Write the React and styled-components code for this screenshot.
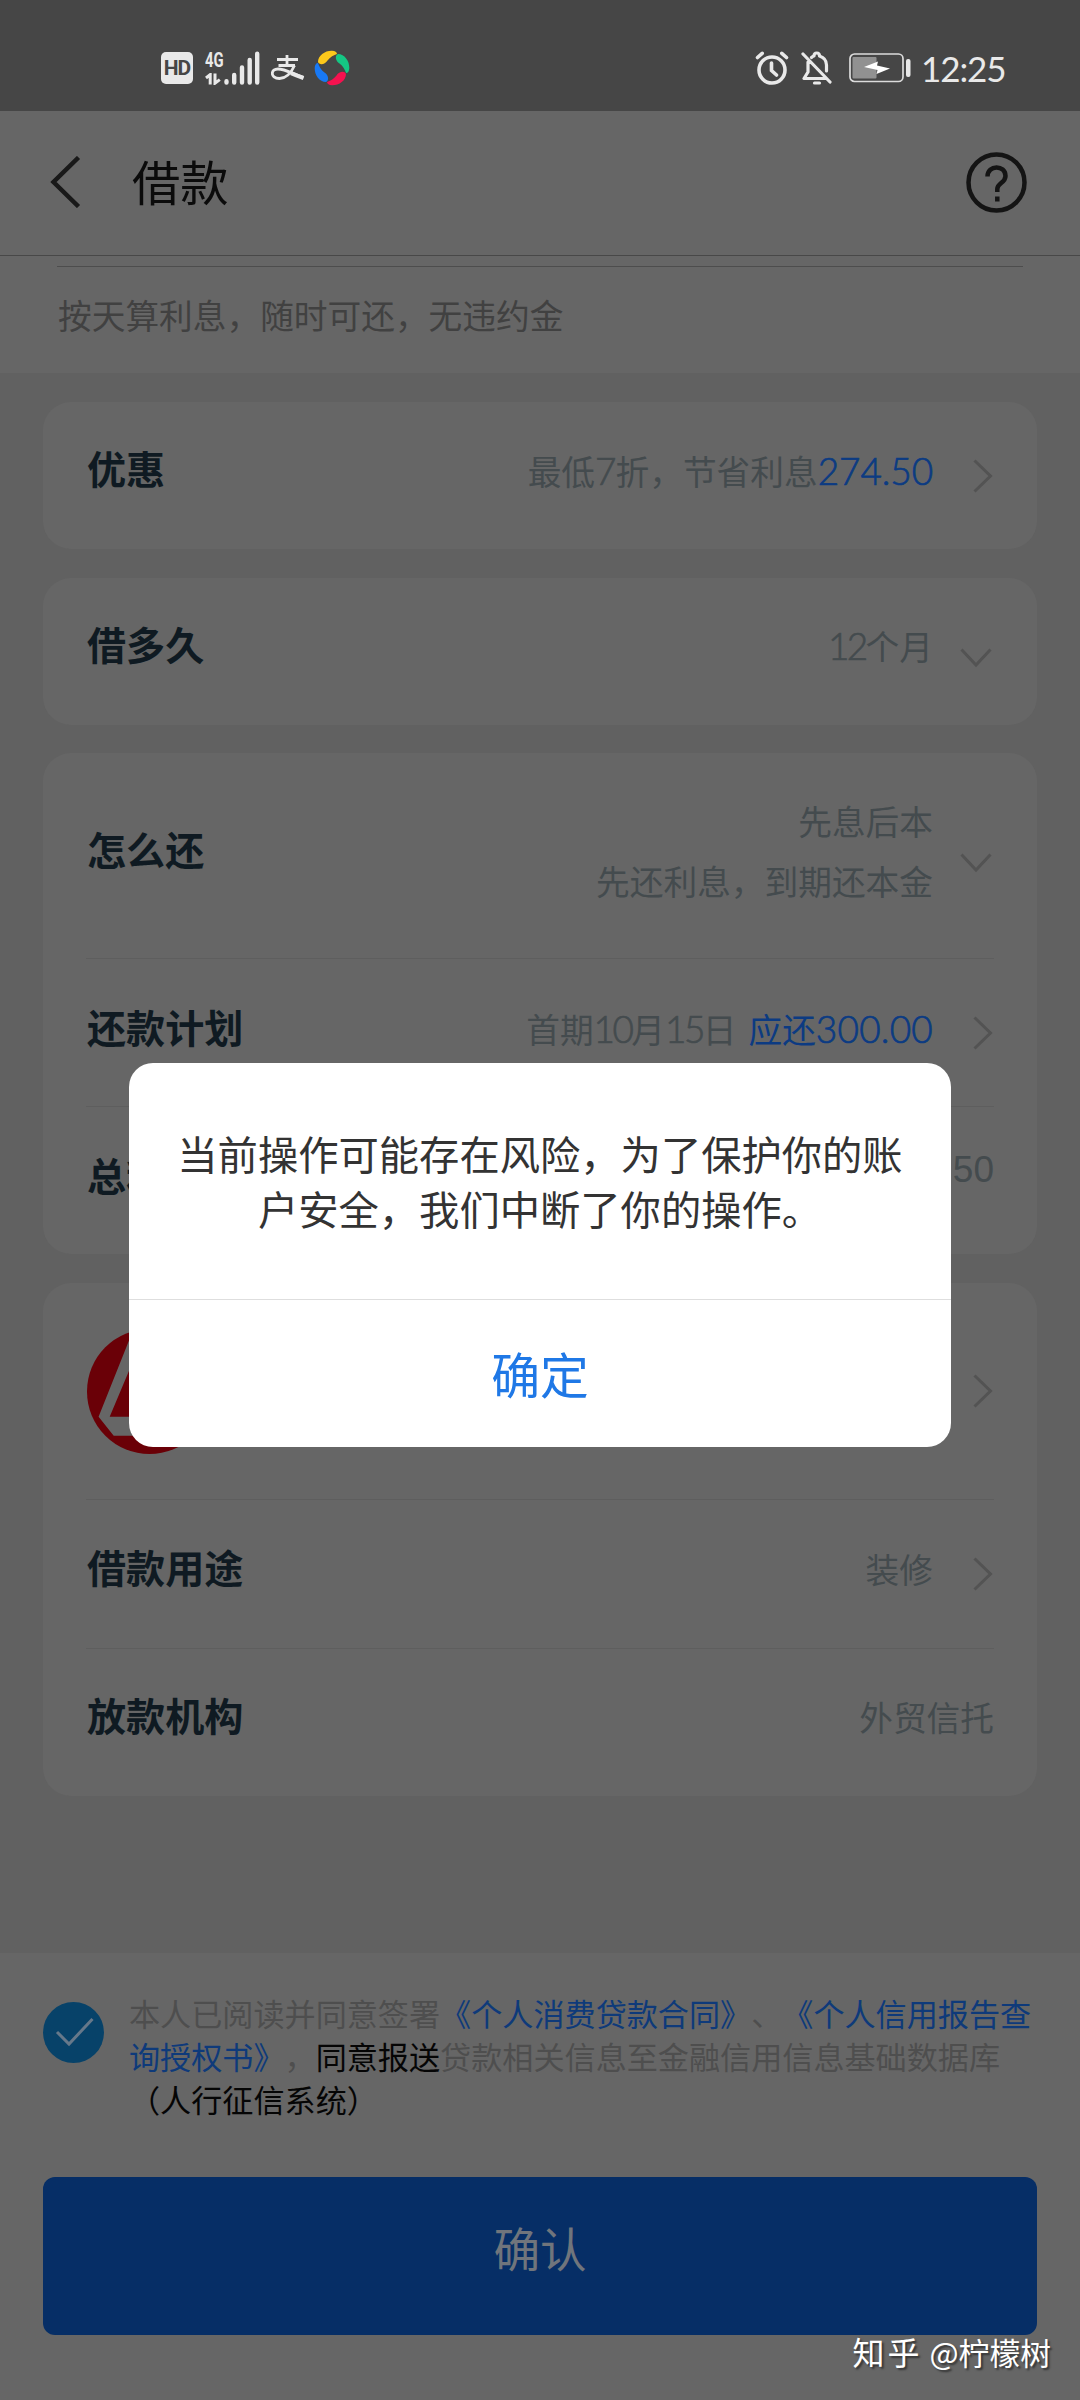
import React from 'react';
import styled, { createGlobalStyle } from 'styled-components';

const Global = createGlobalStyle`
  * { box-sizing: border-box; }
  body { margin: 0; background: #666; }
`;

const cjk = "'Noto Sans CJK SC', sans-serif";

const Screen = styled.div`
  position: relative;
  width: 1080px;
  height: 2400px;
  overflow: hidden;
  display: flex;
  flex-direction: column;
  background: #616161;
  font-family: ${cjk};
  font-weight: 400;
  text-spacing-trim: space-all;
`;

const StatusBar = styled.div`
  height: 111px;
  flex: none;
  display: flex;
  align-items: center;
  justify-content: space-between;
  padding: 25px 75px 0 161px;
  background: #464646;
`;

const StatusGroup = styled.div`
  display: flex;
  align-items: center;
`;

const HdBadge = styled.span`
  width: 32px;
  height: 32px;
  border-radius: 5px;
  background: #e9e9e9;
  color: #464646;
  font: 700 21px/33px Roboto, sans-serif;
  letter-spacing: -1px;
  text-align: center;
`;

const Network = styled.div`
  width: 19px;
  height: 34px;
  margin-left: 12px;
  display: flex;
  flex-direction: column;
  justify-content: space-between;
`;

const NetworkText = styled.span`
  font: 700 20px/18px Roboto, sans-serif;
  color: #e9e9e9;
  transform: scaleX(0.74);
  transform-origin: left center;
`;

const Icon = styled.svg`
  display: block;
  flex: none;
  margin-left: ${(p) => p.$gap || 0}px;
`;

const Clock = styled.span`
  margin-left: 10px;
  width: 84px;
  font: 400 35px/38px Lato, sans-serif;
  letter-spacing: -1.1px;
  color: #e9e9e9;
  white-space: nowrap;
`;

const Header = styled.header`
  height: 145px;
  flex: none;
  display: flex;
  align-items: center;
  padding: 0 53px 2px 50px;
  background: #666;
  border-bottom: 1px solid #484848;
`;

const Title = styled.h1`
  flex: 1;
  margin: 0 0 0 51px;
  font-size: 48.3px;
  line-height: 60px;
  font-weight: 400;
  color: #0b0b0b;
  padding-bottom: 5px;
`;

const Notice = styled.div`
  height: 117px;
  flex: none;
  padding: 10px 57px 0;
  background: #666;
`;

const NoticeText = styled.p`
  margin: 0;
  border-top: 1px solid #4d4d4d;
  padding: 23px 0 0 1px;
  font-size: 33.7px;
  line-height: 50px;
  color: #414141;
`;

const Cards = styled.main`
  flex: none;
  height: 1580px;
  display: flex;
  flex-direction: column;
  gap: 28.5px;
  padding: 29px 43px 0;
`;

const Card = styled.section`
  flex: none;
  padding: 0 43px;
  border-radius: 28px;
  background: #666;
`;

const Row = styled.div`
  height: ${(p) => p.$h || 147}px;
  display: flex;
  align-items: center;
  border-bottom: ${(p) => (p.$line ? '1px solid #5e5e5e' : '0')};
`;

const Label = styled.div`
  flex: 1;
  font-size: 39.1px;
  line-height: 60px;
  font-weight: 700;
  color: #0f1a22;
  padding: 0 0 ${(p) => p.$lift || 16}px 1px;
`;

const Value = styled.div`
  font-size: 33.7px;
  line-height: 60px;
  text-align: right;
  color: #444b4e;
  padding-bottom: ${(p) => p.$lift || 10}px;
  white-space: pre;
`;

const Num = styled.span`
  font-family: Lato, sans-serif;
  font-size: 37px;
  font-weight: 300;
  -webkit-text-stroke: 0.7px currentColor;
  letter-spacing: ${(p) => p.$ls || -2.6}px;
`;

const Amount = styled.span`
  color: #0c3b82;
  margin-left: ${(p) => p.$gap || 0}px;
`;

const Plain = styled.span`
  font-family: 'Liberation Sans', sans-serif;
  font-size: 37px;
`;

const ArrowBox = styled.div`
  width: 61px;
  flex: none;
  display: flex;
  justify-content: flex-end;
  padding: ${(p) => (p.$down ? '14px 2px 0 0' : '0 1px 0 0')};
`;

const Footer = styled.footer`
  flex: 1;
  padding: 41px 43px 0;
  background: #666;
`;

const Agreement = styled.div`
  display: flex;
  gap: 25px;
  height: 183px;
`;

const Check = styled.div`
  width: 61px;
  height: 61px;
  margin-top: 8px;
  flex: none;
  border-radius: 50%;
  background: #074269;
`;

const Terms = styled.p`
  margin: -3px -10px 0 0;
  font-size: 31.12px;
  line-height: 43px;
  color: #4e4e4e;
  white-space: nowrap;
`;

const Link = styled.span`
  color: #0e3a7a;
`;

const Strong = styled.span`
  color: #050505;
`;

const Confirm = styled.button`
  display: block;
  width: 994px;
  height: 158px;
  padding: 0 0 18px;
  border: 0;
  border-radius: 12px;
  background: #062e66;
  color: #70757c;
  font: 400 46.6px/60px ${cjk};
`;

const Mask = styled.div`
  position: absolute;
  inset: 111px 0 1px;
  display: flex;
  align-items: center;
  justify-content: center;
`;

const Dialog = styled.div`
  width: 822px;
  height: 384px;
  border-radius: 24px;
  background: #fff;
  display: flex;
  flex-direction: column;
`;

const Message = styled.p`
  margin: 0;
  height: 237px;
  padding-top: 62px;
  border-bottom: 1px solid #dedede;
  font-size: 40.3px;
  line-height: 55px;
  text-align: center;
  color: #333;
`;

const Ok = styled.button`
  flex: 1;
  border: 0;
  background: none;
  padding: 0 0 2px;
  color: #1f78e6;
  font: 400 48.8px/60px ${cjk};
`;

const Watermark = styled.div`
  position: absolute;
  right: 29px;
  bottom: 26px;
  font-size: 30.8px;
  line-height: 44px;
  color: #fff;
  text-shadow: 2px 2px 2px rgba(0, 0, 0, 0.5);
  white-space: pre;
`;

const Brand = styled.span`
  font-size: 32px;
  letter-spacing: 3px;
`;

const Arrow = ({ down }) => (
  <ArrowBox $down={down}>
    {down ? (
      <Icon width="32" height="20" viewBox="0 0 32 20" fill="none" stroke="#535353" strokeWidth="3">
        <path d="M1.5 1.5L16 17L30.5 1.5" />
      </Icon>
    ) : (
      <Icon width="20" height="34" viewBox="0 0 20 34" fill="none" stroke="#535353" strokeWidth="3">
        <path d="M1.5 1.5L17.5 17L1.5 32.5" />
      </Icon>
    )}
  </ArrowBox>
);

const Signal = () => (
  <Icon width="36" height="34" viewBox="0 0 36 34" stroke="#e9e9e9" strokeWidth="4.4" strokeLinecap="round">
    <path d="M2.5 30.2V31.5M10.2 24V31.5M18 16.5V31.5M25.7 9V31.5M33.2 2.8V31.5" />
  </Icon>
);

const Transfer = () => (
  <Icon width="16" height="12" viewBox="0 0 16 12" fill="none" stroke="#e9e9e9" strokeWidth="3">
    <path d="M1 5L5.2 1.6V11.5M10 0.5V10.2L14.8 6.6" />
  </Icon>
);

const Alipay = () => (
  <Icon $gap={11} width="34" height="26" viewBox="0 0 34 26" fill="none" stroke="#e9e9e9" strokeWidth="2.8">
    <path d="M6 4.5H27M16 0V10M7.5 10.5H24" />
    <path d="M23.5 10.5C21 16 16 23.5 8.5 23.5C3.5 23.5 1.3 20.8 1.3 18.4C1.3 15.8 3.5 14 7 14C14 14 21 18.5 32.5 22.5" />
    <path strokeWidth="4.2" d="M20 18.2C24 20 28 21.5 32.5 23" />
  </Icon>
);

const Swirl = () => (
  <Icon $gap={9} width="36" height="36" viewBox="-18 -18 36 36">
    {[
      ['#fcc81b', 0],
      ['#15c784', 90],
      ['#f5124f', 180],
      ['#1879f5', 270],
    ].map(([color, turn]) => (
      <path
        key={color}
        fill={color}
        transform={`rotate(${turn})`}
        d="M-14 -6C-14 -12.5 -7 -17.5 0 -17.3C3 -17.2 5 -16 5 -14C2 -13 -2 -11 -4.5 -7.5C-7 -3.5 -12.5 -2.5 -14 -6Z"
      />
    ))}
  </Icon>
);

const Alarm = () => (
  <Icon width="34" height="34" viewBox="0 0 34 34" fill="none" stroke="#e9e9e9" strokeWidth="3.6" strokeLinecap="round">
    <circle cx="17" cy="19" r="13" />
    <path d="M2.5 6.5L7.2 2.3M31.5 6.5L26.8 2.3M16.5 12V19.5L21.5 24" />
  </Icon>
);

const Muted = () => (
  <Icon $gap={12} width="32" height="34" viewBox="0 0 32 34" fill="none" stroke="#e9e9e9" strokeWidth="3.2" strokeLinecap="round" strokeLinejoin="round">
    <path d="M2 3L29 31M7 11V21L3 27.5H24M10.5 6.5C12 5.2 13 5 13 5C13 1 18.5 1 18.5 5C23 6.5 25.5 10 25.5 14V20" />
    <path d="M13.5 32H18.5" />
  </Icon>
);

const Battery = () => (
  <Icon $gap={16} width="62" height="30" viewBox="0 0 62 30">
    <rect x="1" y="1" width="53" height="27.5" rx="4.5" fill="none" stroke="#dcdcdc" strokeWidth="1.7" />
    <rect x="3.5" y="4" width="24" height="21.5" rx="1" fill="#919191" />
    <path d="M15 14L29 8.5L28 12.5L41 15.5L27.5 21L28.5 17Z" fill="#fff" />
    <rect x="57" y="6" width="4.5" height="18" rx="2" fill="#e9e9e9" />
  </Icon>
);

const BankLogo = () => (
  <Icon $gap={1} width="125" height="126" viewBox="0 -1 124 125">
    <circle cx="62" cy="62" r="62" fill="#6a0007" />
    <path fill="#666" d="M47 -2L11.5 87L26.5 106H97L112.5 87L77 -2H66V30H58V-2ZM44 36H80L101 87H22.5Z" />
  </Icon>
);

export default function App() {
  return (
    <Screen>
      <Global />
      <StatusBar>
        <StatusGroup>
          <HdBadge>HD</HdBadge>
          <Network>
            <NetworkText>4G</NetworkText>
            <Transfer />
          </Network>
          <Signal />
          <Alipay />
          <Swirl />
        </StatusGroup>
        <StatusGroup>
          <Alarm />
          <Muted />
          <Battery />
          <Clock>12:25</Clock>
        </StatusGroup>
      </StatusBar>

      <Header>
        <Icon width="31" height="52" viewBox="0 0 31 52" fill="none" stroke="#191919" strokeWidth="4.5">
          <path d="M28.5 1.5L3.5 26L28.5 50.5" />
        </Icon>
        <Title>借款</Title>
        <Icon width="61" height="61" viewBox="0 0 61 61" fill="none" stroke="#141414" strokeWidth="4.5">
          <circle cx="30.5" cy="30.5" r="28" />
          <path d="M21.5 24.5C21.5 12.5 39.5 12.5 39.5 24C39.5 31 31.3 31 31.3 37V40M31.3 44.5V49.5" />
        </Icon>
      </Header>

      <Notice>
        <NoticeText>按天算利息，随时可还，无违约金</NoticeText>
      </Notice>

      <Cards>
        <Card>
          <Row>
            <Label $lift={18}>优惠</Label>
            <Value>
              最低<Num $ls={-1}>7</Num>折，节省利息
              <Amount><Num $ls={-0.1}>274.50</Num></Amount>
            </Value>
            <Arrow />
          </Row>
        </Card>
        <Card>
          <Row>
            <Label>借多久</Label>
            <Value><Num>12</Num>个月</Value>
            <Arrow down />
          </Row>
        </Card>
        <Card>
          <Row $h={206} $line>
            <Label>怎么还</Label>
            <Value>先息后本{'\n'}先还利息，到期还本金</Value>
            <Arrow down />
          </Row>
          <Row $h={148} $line>
            <Label $lift={13}>还款计划</Label>
            <Value $lift={8}>
              首期<Num>10</Num>月<Num>15</Num>日
              <Amount $gap={12}>应还<Num $ls={0.2}>300.00</Num></Amount>
            </Value>
            <Arrow />
          </Row>
          <Row>
            <Label $lift={14}>总利</Label>
            <Value $lift={24}><Plain>50</Plain></Value>
          </Row>
        </Card>
        <Card>
          <Row $h={217} $line>
            <BankLogo />
            <Label />
            <Arrow />
          </Row>
          <Row $h={149} $line>
            <Label>借款用途</Label>
            <Value>装修</Value>
            <Arrow />
          </Row>
          <Row>
            <Label>放款机构</Label>
            <Value>外贸信托</Value>
          </Row>
        </Card>
      </Cards>

      <Footer>
        <Agreement>
          <Check>
            <Icon width="61" height="61" viewBox="0 0 61 61" fill="none" stroke="#66788a" strokeWidth="3">
              <path d="M14 30L26 42L49.5 17" />
            </Icon>
          </Check>
          <Terms>
            本人已阅读并同意签署<Link>《个人消费贷款合同》</Link>、<Link>《个人信用报告查</Link>
            <br />
            <Link>询授权书》</Link>，<Strong>同意报送</Strong>贷款相关信息至金融信用信息基础数据库
            <br />
            <Strong>（人行征信系统）</Strong>
          </Terms>
        </Agreement>
        <Confirm>确认</Confirm>
      </Footer>

      <Mask>
        <Dialog>
          <Message>
            当前操作可能存在风险，为了保护你的账
            <br />
            户安全，我们中断了你的操作。
          </Message>
          <Ok>确定</Ok>
        </Dialog>
      </Mask>

      <Watermark><Brand>知乎</Brand> @柠檬树</Watermark>
    </Screen>
  );
}
